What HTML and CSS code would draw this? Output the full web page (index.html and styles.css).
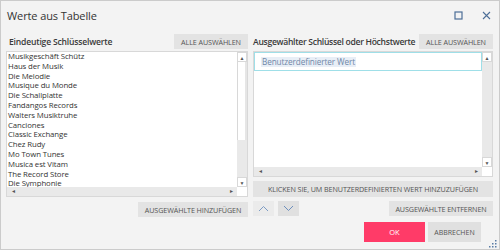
FILE: index.html
```html
<!DOCTYPE html>
<html lang="de">
<head>
<meta charset="utf-8">
<title>Werte aus Tabelle</title>
<link rel="stylesheet" href="styles.css">
</head>
<body>
<div class="dialog">
  <div class="titlebar">
    <span class="title">Werte aus Tabelle</span>
    <span class="wincontrols">
      <svg class="winicon" width="9" height="9" viewBox="0 0 9 9"><rect x="1" y="1" width="7" height="7" fill="none" stroke="#4d6f98" stroke-width="1.2"/></svg>
      <svg class="winicon" width="9" height="9" viewBox="0 0 9 9"><path d="M1 1 L8 8 M8 1 L1 8" stroke="#4d6f98" stroke-width="1.1"/></svg>
    </span>
  </div>
  <div class="content">
    <div class="col">
      <div class="colhead">
        <span class="heading">Eindeutige Schlüsselwerte</span>
        <button class="btn btn-all">ALLE AUSWÄHLEN</button>
      </div>
      <div class="listbox listbox-left">
        <div class="items">
          <div>Musikgeschäft Schütz</div>
          <div>Haus der Musik</div>
          <div>Die Melodie</div>
          <div>Musique du Monde</div>
          <div>Die Schallplatte</div>
          <div>Fandangos Records</div>
          <div>Walters Musiktruhe</div>
          <div>Canciones</div>
          <div>Classic Exchange</div>
          <div>Chez Rudy</div>
          <div>Mo Town Tunes</div>
          <div>Musica est Vitam</div>
          <div>The Record Store</div>
          <div>Die Symphonie</div>
        </div>
        <div class="vscroll">
          <div class="arrow">▲</div>
          <div class="thumb"></div>
          <div class="track"></div>
          <div class="arrow">▼</div>
        </div>
        <div class="hscroll">
          <div class="harrow">◂</div>
          <div class="htrack"></div>
          <div class="harrow">▸</div>
        </div>
        <div class="corner"></div>
      </div>
      <div class="rowend">
        <button class="btn btn-add">AUSGEWÄHLTE HINZUFÜGEN</button>
      </div>
    </div>
    <div class="col">
      <div class="colhead">
        <span class="heading">Ausgewählter Schlüssel oder Höchstwerte</span>
        <button class="btn btn-all">ALLE AUSWÄHLEN</button>
      </div>
      <div class="listbox listbox-right">
        <div class="items">
          <div class="custom"><span class="sel">Benutzerdefinierter Wert</span></div>
        </div>
        <div class="vscroll">
          <div class="arrow">▲</div>
          <div class="track"></div>
          <div class="arrow">▼</div>
        </div>
        <div class="hscroll">
          <div class="harrow">◂</div>
          <div class="htrack"></div>
          <div class="harrow">▸</div>
        </div>
        <div class="corner"></div>
      </div>
      <button class="btn btn-wide">KLICKEN SIE, UM BENUTZERDEFINIERTEN WERT HINZUZUFÜGEN</button>
      <div class="rowsplit">
        <div class="movers">
          <button class="btn-icon btn-up"><svg width="11" height="7" viewBox="0 0 11 7"><path d="M1 6 L5.5 1.5 L10 6" fill="none" stroke="#7d9cc4" stroke-width="1"/></svg></button>
          <button class="btn-icon btn-down"><svg width="11" height="7" viewBox="0 0 11 7"><path d="M1 1 L5.5 5.5 L10 1" fill="none" stroke="#6d8fbd" stroke-width="1"/></svg></button>
        </div>
        <button class="btn btn-remove">AUSGEWÄHLTE ENTFERNEN</button>
      </div>
    </div>
  </div>
  <div class="footer">
    <button class="btn-ok">OK</button>
    <button class="btn-cancel">ABBRECHEN</button>
  </div>
  <svg class="grip" width="8" height="8" viewBox="0 0 8 8"><g fill="#5a7ca6"><rect x="6" y="0" width="1.5" height="1.5"/><rect x="3" y="3" width="1.5" height="1.5"/><rect x="6" y="3" width="1.5" height="1.5"/><rect x="0" y="6" width="1.5" height="1.5"/><rect x="3" y="6" width="1.5" height="1.5"/><rect x="6" y="6" width="1.5" height="1.5"/></g></svg>
</div>
</body>
</html>
```
FILE: styles.css
```css
* { box-sizing: border-box; }
html, body { margin: 0; padding: 0; background: #ffffff; }
body {
  font-family: "Open Sans", "Noto Sans", sans-serif;
  color: #333;
}
.dialog {
  position: relative;
  width: 500px;
  height: 250px;
  border: 1px solid #cbcbcb;
  background: #f3f3f3;
  display: flex;
  flex-direction: column;
}
.titlebar {
  height: 32px;
  display: flex;
  align-items: center;
  justify-content: space-between;
  padding: 0 8px 4px 6px;
}
.title {
  font-size: 11px;
  color: #333;
  letter-spacing: -0.1px;
}
.wincontrols { display: flex; gap: 19px; align-items: center; }
.winicon { display: block; }
.content {
  display: grid;
  grid-template-columns: 242px 240px;
  column-gap: 5px;
  padding-left: 5px;
}
.col { display: flex; flex-direction: column; }
.colhead {
  height: 17px;
  display: flex;
  align-items: center;
  justify-content: space-between;
  margin-bottom: 1px;
}
.heading {
  font-size: 8.6px;
  font-weight: 600;
  color: #3a3a3a;
  padding-left: 3px;
  letter-spacing: -0.2px;
}
.col:nth-child(2) .heading { padding-left: 0; letter-spacing: -0.3px; }
.btn {
  font-family: inherit;
  border: none;
  background: #e3e3e3;
  color: #555;
  font-size: 7.2px;
  height: 15px;
  padding: 0 6px;
  letter-spacing: -0.1px;
  cursor: pointer;
}
.btn-all { width: 74px; padding: 0; }
.listbox {
  background: #fff;
  border: 1px solid #d8d8d8;
  display: grid;
  grid-template-columns: 1fr 10px;
  grid-template-rows: 1fr 9px;
}
.listbox-left { height: 146px; }
.listbox-right { height: 126px; }
.items {
  overflow: hidden;
  font-size: 7.8px;
  line-height: 9.8px;
  padding: 0 0 0 1px;
  color: #333;
  letter-spacing: -0.1px;
}
.vscroll {
  display: flex;
  flex-direction: column;
  background: #e9e9e9;
}
.arrow {
  height: 10px;
  font-size: 5px;
  line-height: 10px;
  text-align: center;
  color: #555;
  background: #fff;
  border: 1px solid #d8d8d8;
}
.thumb { height: 78px; background: #fff; border-left: 1px solid #d8d8d8; border-right: 2px solid #e6e6e6; }
.track { flex: 1; }
.hscroll {
  display: flex;
  background: #e9e9e9;
}
.harrow {
  width: 12px;
  font-size: 6px;
  line-height: 9px;
  text-align: center;
  color: #555;
}
.htrack { flex: 1; }
.corner { background: #fff; }
.rowend {
  display: flex;
  justify-content: flex-end;
  margin-top: 5px;
}
.btn-add { width: 110px; padding: 0; }
.listbox-right .items { padding: 0; }
.custom {
  height: 19px;
  border: 1px solid #9fdfe8;
  display: flex;
  align-items: center;
  padding-left: 6px;
  font-size: 8.2px;
  color: #7088a8;
}
.sel { background: #e8eef6; padding: 0 1px; line-height: 10px; }
.btn-wide {
  margin-top: 4px;
  height: 16px;
  width: 100%;
  padding: 0;
  font-size: 7.2px;
}
.rowsplit {
  margin-top: 4px;
  display: flex;
  justify-content: space-between;
  align-items: center;
}
.btn-remove { width: 104px; padding: 0; }
.movers { display: flex; gap: 4px; }
.btn-icon {
  width: 21px;
  height: 15px;
  border: none;
  padding: 0;
  display: flex;
  align-items: center;
  justify-content: center;
}
.btn-up { background: #ebebeb; }
.btn-down { background: #e0e0e0; }
.footer {
  margin-top: 5px;
  display: flex;
  justify-content: flex-end;
  gap: 3px;
  padding-right: 18px;
}
.btn-ok {
  font-family: inherit;
  width: 61px;
  height: 20px;
  border: none;
  background: #ff3b68;
  color: #fff;
  font-size: 7.5px;
}
.btn-cancel {
  font-family: inherit;
  width: 53px;
  height: 20px;
  border: none;
  background: #e0e0e0;
  color: #555;
  font-size: 7px;
}
.grip { position: absolute; right: 2px; bottom: 1px; }
```
